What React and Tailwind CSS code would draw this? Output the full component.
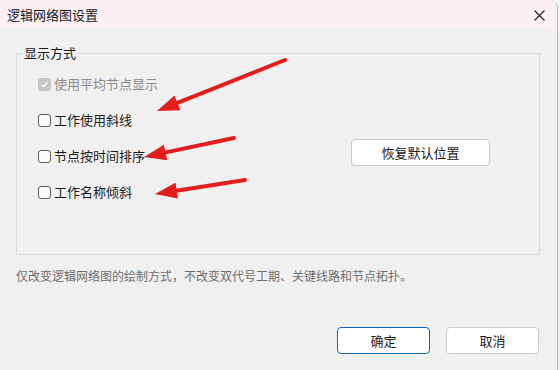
import React from "react";

const font = { fontFamily: '"Noto Sans CJK SC", "Noto Sans", sans-serif' };

function CheckBox({ label, checked, disabled }) {
  return (
    <div className="flex items-center h-[36px]">
      {disabled ? (
        <span className="w-[13px] h-[13px] rounded-[3px] bg-[#c5c5c5] flex items-center justify-center">
          <svg width="9" height="9" viewBox="0 0 9 9">
            <path d="M1.5 4.6 L3.6 6.6 L7.6 2.2" fill="none" stroke="#fff" strokeWidth="1.3" />
          </svg>
        </span>
      ) : (
        <span className="w-[13px] h-[13px] rounded-[3px] border border-[#5c5c5c] bg-[#fbfbfb]" />
      )}
      <span className={`ml-[3px] text-[13px] leading-[16px] ${disabled ? "text-[#8c8c8c]" : "text-[#1b1b1b]"}`}>
        {label}
      </span>
    </div>
  );
}

function Arrow({ x1, y1, x2, y2 }) {
  const dx = x2 - x1;
  const dy = y2 - y1;
  const len = Math.sqrt(dx * dx + dy * dy);
  const ux = dx / len;
  const uy = dy / len;
  const hl = 22;
  const hw = 8;
  const bx = x2 - ux * hl;
  const by = y2 - uy * hl;
  const pts = `${x2},${y2} ${bx - uy * hw},${by + ux * hw} ${bx + uy * hw},${by - ux * hw}`;
  return (
    <g>
      <line x1={x1} y1={y1} x2={bx + ux * 2} y2={by + uy * 2} stroke="#e31c1c" strokeWidth="4" strokeLinecap="round" />
      <polygon points={pts} fill="#e31c1c" />
    </g>
  );
}

export default function App() {
  return (
    <div className="w-[560px] h-[370px] bg-[#f3f3f3] relative overflow-hidden" style={font}>
      <div className="w-[558px] h-[370px] bg-[#f0f0f0] border-r border-[#b5b5b5] rounded-tr-[8px] overflow-hidden flex flex-col">
        {/* TITLE */}
        <div className="h-[30px] bg-[#f9eff4] flex items-center justify-between pl-[7px] pr-[12px]">
          <span className="text-[13px] text-[#1a1a1a] leading-[16px]">逻辑网络图设置</span>
          <svg width="11" height="11" viewBox="0 0 11 11">
            <path d="M0.5 0.5 L10.5 10.5 M10.5 0.5 L0.5 10.5" stroke="#222" strokeWidth="1.1" />
          </svg>
        </div>

        {/* BODY */}
        <div className="pl-[16px] pr-[17px] pt-[23px]">
          <div className="relative h-[202px] border border-[#d9d9d9] flex items-start pt-[12px] pl-[21px]">
            <span className="absolute left-[6px] top-[-9px] px-[1px] bg-[#f0f0f0] text-[13px] leading-[16px] text-[#1a1a1a]">
              显示方式
            </span>
            <div className="w-[313px] flex flex-col">
              <CheckBox label="使用平均节点显示" checked disabled />
              <CheckBox label="工作使用斜线" />
              <CheckBox label="节点按时间排序" />
              <CheckBox label="工作名称倾斜" />
            </div>
            <button className="mt-[73px] w-[139px] h-[27px] bg-white border border-[#cacaca] rounded-[4px] text-[13px] text-[#1a1a1a] leading-[16px]">
              恢复默认位置
            </button>
          </div>
          <div className="mt-[13px] text-[12px] leading-[16px] text-[#6e6e6e]">
            仅改变逻辑网络图的绘制方式，不改变双代号工期、关键线路和节点拓扑。
          </div>
        </div>

        {/* FOOTER */}
        <div className="mt-[43px] flex justify-end gap-[16px] pr-[18px]">
          <button className="w-[93px] h-[27px] bg-white border border-[#0a68c2] rounded-[4px] text-[13px] text-[#1a1a1a] leading-[16px]">
            确定
          </button>
          <button className="w-[93px] h-[27px] bg-white border border-[#cbcbcb] rounded-[4px] text-[13px] text-[#1a1a1a] leading-[16px]">
            取消
          </button>
        </div>
      </div>

      {/* ANNOTATION ARROWS */}
      <svg className="absolute left-0 top-0 pointer-events-none" width="560" height="370">
        <Arrow x1={285} y1={60} x2={157} y2={111} />
        <Arrow x1={234} y1={138} x2={144} y2={157} />
        <Arrow x1={245} y1={180} x2={155} y2={194} />
      </svg>
    </div>
  );
}
